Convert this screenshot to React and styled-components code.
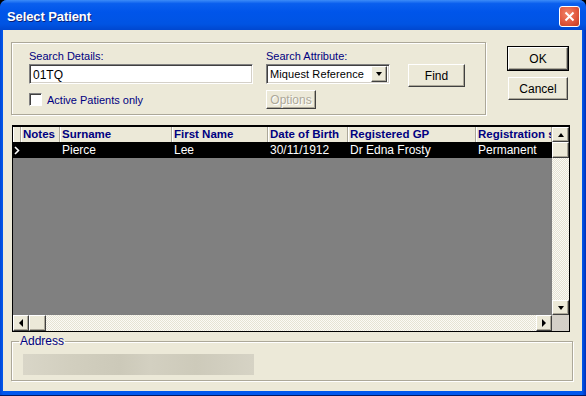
import styled, { createGlobalStyle } from "styled-components";

const Global = createGlobalStyle`
  html, body {
    margin: 0;
    padding: 0;
    background: #000;
  }
  body {
    font-family: "Liberation Sans", Arial, sans-serif;
    font-size: 11px;
  }
`;

const columns = [
  { title: "Notes", width: 39, value: "" },
  { title: "Surname", width: 112, value: "Pierce" },
  { title: "First Name", width: 96, value: "Lee" },
  { title: "Date of Birth", width: 80, value: "30/11/1912" },
  { title: "Registered GP", width: 128, value: "Dr Edna Frosty" },
  { title: "Registration status", width: 76, value: "Permanent" },
];

const Window = styled.div`
  width: 586px;
  height: 396px;
  box-sizing: border-box;
  display: flex;
  flex-direction: column;
  background: linear-gradient(90deg, #0046d5 0%, #0058ee 3px, #0058ee calc(100% - 4px), #0030b8 100%);
  border-radius: 7px 7px 0 0;
  padding: 0 4px 4px 3px;
  border-bottom: 1px solid #001a66;
`;

const TitleBar = styled.div`
  height: 30px;
  flex: none;
  display: flex;
  align-items: center;
  justify-content: space-between;
  margin: 0 -4px 0 -3px;
  padding: 2px 6px 0 7px;
  box-sizing: border-box;
  border-radius: 7px 7px 0 0;
  background: linear-gradient(180deg, #3c8cf8 0%, #0a5fee 12%, #0055ea 40%, #0054e3 80%, #0047cf 100%);
`;

const Title = styled.span`
  color: #fff;
  font-weight: bold;
  font-size: 13px;
  letter-spacing: -0.1px;
  text-shadow: 1px 1px #0a1f77;
`;

const CloseButton = styled.div`
  width: 21px;
  height: 21px;
  box-sizing: border-box;
  border: 1px solid #fff;
  border-radius: 3px;
  background: radial-gradient(circle at 40% 35%, #f0876a 0%, #e2583e 55%, #c23a1d 100%);
  display: flex;
  align-items: center;
  justify-content: center;
`;

const Client = styled.div`
  flex: 1;
  background: #ece9d8;
  display: flex;
  flex-direction: column;
  padding: 12px 0 0 8px;
`;

const TopRow = styled.div`
  display: flex;
  align-items: flex-start;
  gap: 20px;
`;

const GroupBox = styled.div`
  width: 475px;
  height: 73px;
  box-sizing: border-box;
  border: 1px solid #aca899;
  box-shadow: inset 1px 1px #fff, 1px 1px #fff;
  display: flex;
  padding: 6px 0 0 17px;
  gap: 13px;
`;

const Field = styled.div`
  display: flex;
  flex-direction: column;
`;

const Label = styled.label`
  color: #000080;
  font-size: 11px;
  line-height: 14px;
  height: 15px;
`;

const Sunken = `
  box-sizing: border-box;
  height: 20px;
  border: 1px solid;
  border-color: #808080 #fff #fff #808080;
  box-shadow: inset 1px 1px #404040, inset -1px -1px #d4d0c8;
  background: #fff;
  font-size: 12px;
  font-family: "Liberation Sans", Arial, sans-serif;
`;

const TextInput = styled.div`
  ${Sunken}
  width: 224px;
  padding: 3px 0 0 3px;
`;

const Select = styled.div`
  ${Sunken}
  width: 124px;
  display: flex;
  align-items: center;
  justify-content: space-between;
  padding: 0 2px 0 3px;
  font-size: 11px;
  letter-spacing: 0.1px;
`;

const DropButton = styled.div`
  width: 16px;
  height: 16px;
  box-sizing: border-box;
  background: #ece9d8;
  border: 1px solid;
  border-color: #fff #404040 #404040 #fff;
  box-shadow: inset -1px -1px #aca899;
  display: flex;
  align-items: center;
  justify-content: center;
`;

const Arrow = styled.span`
  width: 0;
  height: 0;
  border-left: ${(p) => (p.$dir === "down" || p.$dir === "up" ? "3.5px solid transparent" : p.$dir === "right" ? "4px solid #000" : "none")};
  border-right: ${(p) => (p.$dir === "down" || p.$dir === "up" ? "3.5px solid transparent" : p.$dir === "left" ? "4px solid #000" : "none")};
  border-top: ${(p) => (p.$dir === "down" ? "4px solid #000" : p.$dir === "up" ? "none" : "4px solid transparent")};
  border-bottom: ${(p) => (p.$dir === "up" ? "4px solid #000" : p.$dir === "down" ? "none" : "4px solid transparent")};
`;

const CheckRow = styled.div`
  display: flex;
  align-items: center;
  gap: 5px;
  margin-top: 9px;
  color: #000080;
`;

const CheckBox = styled.span`
  width: 13px;
  height: 13px;
  box-sizing: border-box;
  border: 1px solid;
  border-color: #808080 #fff #fff #808080;
  box-shadow: inset 1px 1px #404040;
  background: #fff;
`;

const Button = styled.div`
  width: ${(p) => p.$w}px;
  height: ${(p) => p.$h}px;
  box-sizing: border-box;
  background: #ece9d8;
  border: 1px solid;
  border-color: #fff #404040 #404040 #fff;
  box-shadow: inset -1px -1px #aca899;
  display: flex;
  align-items: center;
  justify-content: center;
  font-size: 12px;
  color: ${(p) => (p.$disabled ? "#aca899" : "#000")};
  text-shadow: ${(p) => (p.$disabled ? "1px 1px #fff" : "none")};
  outline: ${(p) => (p.$default ? "1px solid #000" : "none")};
`;

const ButtonColumn = styled.div`
  display: flex;
  flex-direction: column;
  gap: 7px;
  padding-top: 5px;
  padding-left: 2px;
`;

const Grid = styled.div`
  margin: 10px 0 0 1px;
  width: 558px;
  height: 207px;
  box-sizing: border-box;
  border: 1px solid #000;
  border-top-width: 2px;
  display: flex;
  flex-direction: column;
  background: #808080;
`;

const GridMain = styled.div`
  flex: 1;
  display: flex;
  min-height: 0;
`;

const Table = styled.div`
  flex: 1;
  overflow: hidden;
  display: flex;
  flex-direction: column;
`;

const Row = styled.div`
  display: flex;
  height: ${(p) => p.$h}px;
  flex: none;
  background: ${(p) => (p.$header ? "#ece9d8" : "#000")};
`;

const Cell = styled.div`
  width: ${(p) => p.$w}px;
  flex: none;
  box-sizing: border-box;
  overflow: hidden;
  white-space: nowrap;
  padding-left: ${(p) => (p.$header ? 1 : 2)}px;
  line-height: ${(p) => (p.$header ? 14 : 16)}px;
  font-size: ${(p) => (p.$header ? 11.5 : 12)}px;
  font-weight: ${(p) => (p.$header ? "bold" : "normal")};
  color: ${(p) => (p.$header ? "#000080" : "#fff")};
  border-left: ${(p) => (p.$header ? "1px solid #fff" : "none")};
  border-right: ${(p) => (p.$header ? "1px solid #aca899" : "none")};
`;

const Indicator = styled.div`
  width: 8px;
  flex: none;
  box-sizing: border-box;
  background: ${(p) => (p.$header ? "#ece9d8" : "#000")};
  border-left: ${(p) => (p.$header ? "1px solid #fff" : "none")};
  border-right: ${(p) => (p.$header ? "1px solid #aca899" : "none")};
  display: flex;
  align-items: center;
  justify-content: center;
`;

const ScrollTrack = styled.div`
  flex: none;
  display: flex;
  flex-direction: ${(p) => (p.$vertical ? "column" : "row")};
  ${(p) => (p.$vertical ? "width: 17px;" : "height: 16px;")}
  background: repeating-conic-gradient(#fbfaf6 0 25%, #e6e3d3 0 50%) 0 0 / 2px 2px;
`;

const ScrollButton = styled.div`
  width: ${(p) => p.$w}px;
  height: ${(p) => p.$h}px;
  flex: none;
  box-sizing: border-box;
  background: #ece9d8;
  border: 1px solid;
  border-color: #fff #404040 #404040 #fff;
  box-shadow: inset -1px -1px #aca899;
  display: flex;
  align-items: center;
  justify-content: center;
`;

const Spacer = styled.div`
  flex: 1;
`;

const Corner = styled.div`
  width: 17px;
  flex: none;
  background: #d4d0c8;
`;

const AddressBox = styled.fieldset`
  margin: 2px 0 0 0;
  width: 562px;
  height: 47px;
  box-sizing: border-box;
  border: 1px solid #aca899;
  box-shadow: inset 1px 1px #fff, 1px 1px #fff;
  padding: 6px 0 0 11px;
  min-width: 0;
`;

const Legend = styled.legend`
  color: #000080;
  font-size: 12px;
  padding: 0 1px;
  margin-left: -4px;
`;

const BlurredField = styled.div`
  width: 231px;
  height: 21px;
  background: linear-gradient(90deg, #d9d6c8 0%, #d2cfbf 20%, #ccc9b9 42%, #d3d0c1 55%, #cdcaba 75%, #d6d3c5 100%);
`;

const Chevron = () => (
  <svg width="6" height="9" viewBox="0 0 6 9">
    <path d="M1 1 L4.5 4.5 L1 8" stroke="#fff" strokeWidth="1.6" fill="none" />
  </svg>
);

export default function App() {
  return (
    <>
      <Global />
      <Window>
        <TitleBar>
          <Title>Select Patient</Title>
          <CloseButton>
            <svg width="11" height="11" viewBox="0 0 11 11">
              <path d="M1.5 1.5 L9.5 9.5 M9.5 1.5 L1.5 9.5" stroke="#fff" strokeWidth="2" />
            </svg>
          </CloseButton>
        </TitleBar>
        <Client>
          <TopRow>
            <GroupBox>
              <Field>
                <Label>Search Details:</Label>
                <TextInput>01TQ</TextInput>
                <CheckRow>
                  <CheckBox />
                  <span>Active Patients only</span>
                </CheckRow>
              </Field>
              <Field>
                <Label>Search Attribute:</Label>
                <Select>
                  <span>Miquest Reference</span>
                  <DropButton>
                    <Arrow $dir="down" />
                  </DropButton>
                </Select>
                <div style={{ height: 6 }} />
                <Button $w={50} $h={19} $disabled>
                  Options
                </Button>
              </Field>
              <Field style={{ paddingTop: 15, marginLeft: 5 }}>
                <Button $w={57} $h={23}>Find</Button>
              </Field>
            </GroupBox>
            <ButtonColumn>
              <Button $w={60} $h={23} $default>
                OK
              </Button>
              <Button $w={60} $h={23}>Cancel</Button>
            </ButtonColumn>
          </TopRow>

          <Grid>
            <GridMain>
              <Table>
                <Row $header $h={15}>
                  <Indicator $header />
                  {columns.map((c) => (
                    <Cell key={c.title} $header $w={c.width}>
                      {c.title}
                    </Cell>
                  ))}
                </Row>
                <Row $h={16}>
                  <Indicator>
                    <Chevron />
                  </Indicator>
                  {columns.map((c) => (
                    <Cell key={c.title} $w={c.width}>
                      {c.value}
                    </Cell>
                  ))}
                </Row>
              </Table>
              <ScrollTrack $vertical>
                <ScrollButton $w={17} $h={15}>
                  <Arrow $dir="up" />
                </ScrollButton>
                <ScrollButton $w={17} $h={16} />
                <Spacer />
                <ScrollButton $w={17} $h={15}>
                  <Arrow $dir="down" />
                </ScrollButton>
              </ScrollTrack>
            </GridMain>
            <ScrollTrack>
              <ScrollButton $w={16} $h={16}>
                <Arrow $dir="left" />
              </ScrollButton>
              <ScrollButton $w={17} $h={16} />
              <Spacer />
              <ScrollButton $w={16} $h={16}>
                <Arrow $dir="right" />
              </ScrollButton>
              <Corner />
            </ScrollTrack>
          </Grid>

          <AddressBox>
            <Legend>Address</Legend>
            <BlurredField />
          </AddressBox>
        </Client>
      </Window>
    </>
  );
}
